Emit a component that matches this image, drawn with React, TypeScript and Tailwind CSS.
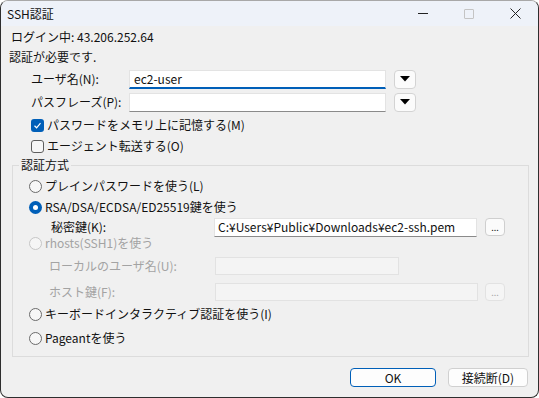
import React from 'react';

const font = { fontFamily: "'Noto Sans CJK JP', 'Noto Sans', sans-serif" };

function Radio({ checked, disabled }: { checked?: boolean; disabled?: boolean }) {
    if (checked) {
        return (
            <span className="w-[13px] h-[13px] rounded-full bg-[#005fb8] flex items-center justify-center shrink-0">
                <span className="w-[5px] h-[5px] rounded-full bg-white" />
            </span>
        );
    }
    return (
        <span
            className={`w-[13px] h-[13px] rounded-full border shrink-0 ${disabled ? 'border-[#c6c6c6] bg-[#f5f5f5]' : 'border-[#6b6b6b] bg-[#f7f7f7]'}`}
        />
    );
}

function Checkbox({ checked }: { checked?: boolean }) {
    if (checked) {
        return (
            <span className="w-[13px] h-[13px] rounded-[3px] bg-[#005fb8] flex items-center justify-center shrink-0">
                <svg width="9" height="9" viewBox="0 0 9 9">
                    <path d="M1.5 4.8 L3.6 6.8 L7.5 2.2" stroke="white" strokeWidth="1.2" fill="none" />
                </svg>
            </span>
        );
    }
    return <span className="w-[13px] h-[13px] rounded-[3px] border border-[#5f5f5f] bg-[#f7f7f7] shrink-0" />;
}

function DropButton() {
    return (
        <div className="w-[22px] h-[19px] rounded-[4px] border border-[#d3d3d3] bg-[#fbfbfb] flex items-center justify-center">
            <svg width="10" height="6" viewBox="0 0 10 6">
                <path d="M0 0 L10 0 L5 5.5 Z" fill="#000" />
            </svg>
        </div>
    );
}

function DotsButton({ disabled }: { disabled?: boolean }) {
    return (
        <div
            className={`w-[20px] h-[18px] rounded-[4px] border flex items-end justify-center pb-[3px] text-[9px] leading-none ${disabled ? 'border-[#e2e2e2] bg-[#f5f5f5] text-[#a8a8a8]' : 'border-[#cfcfcf] bg-[#fbfbfb] text-[#222]'}`}
        >
            ...
        </div>
    );
}

export default function App() {
    return (
        <div
            className="w-[539px] h-[398px] bg-[#f0f0f0] border border-[#2e2e2e] border-t-[#a8a8a8] rounded-t-lg rounded-b-lg overflow-hidden flex flex-col text-[12px] text-[#111]"
            style={font}
        >
            {/* Title bar */}
            <div className="h-[25px] bg-[#eef2f9] flex items-center shrink-0">
                <span className="pl-[6px] text-[12px] leading-none">SSH認証</span>
                <div className="ml-auto flex items-center h-full">
                    <div className="w-[46px] flex justify-center">
                        <span className="w-[10px] h-px bg-[#222]" />
                    </div>
                    <div className="w-[46px] flex justify-center">
                        <span className="w-[10px] h-[10px] border border-[#c4c4c4] rounded-[1px]" />
                    </div>
                    <div className="w-[46px] flex justify-center">
                        <svg width="11" height="11" viewBox="0 0 11 11">
                            <path d="M0.5 0.5 L10.5 10.5 M10.5 0.5 L0.5 10.5" stroke="#222" strokeWidth="1" />
                        </svg>
                    </div>
                </div>
            </div>

            <div className="flex flex-col">
                <div className="mt-[2px] h-[18px] pl-[10px] flex items-center">ログイン中: 43.206.252.64</div>
                <div className="mt-[2px] h-[18px] pl-[8px] flex items-center">認証が必要です.</div>

                <div className="mt-[4px] h-[18px] pl-[30px] flex items-center">
                    <span className="w-[98px]">ユーザ名(N):</span>
                    <div className="w-[257px] h-[19px] bg-white border border-[#e3e3e3] border-b-2 border-b-[#005fb8] flex items-center pl-[4px]">
                        ec2-user
                    </div>
                    <div className="ml-[8px]">
                        <DropButton />
                    </div>
                </div>

                <div className="mt-[5px] h-[18px] pl-[30px] flex items-center">
                    <span className="w-[98px]">パスフレーズ(P):</span>
                    <div className="w-[257px] h-[19px] bg-white border border-[#e3e3e3] border-b-[#8a8a8a]" />
                    <div className="ml-[8px]">
                        <DropButton />
                    </div>
                </div>

                <div className="mt-[7px] h-[14px] pl-[30px] flex items-center gap-[3px]">
                    <Checkbox checked />
                    <span>パスワードをメモリ上に記憶する(M)</span>
                </div>
                <div className="mt-[7px] h-[14px] pl-[30px] flex items-center gap-[3px]">
                    <Checkbox />
                    <span>エージェント転送する(O)</span>
                </div>

                {/* Group box */}
                <div className="relative mt-[12px] ml-[11px] w-[517px] h-[192px] border border-[#dcdcdc] flex flex-col">
                    <span className="absolute left-[6px] top-[-8px] px-[2px] bg-[#f0f0f0] leading-[14px]">認証方式</span>

                    <div className="mt-[13px] h-[14px] pl-[16px] flex items-center gap-[3px]">
                        <Radio />
                        <span>プレインパスワードを使う(L)</span>
                    </div>
                    <div className="mt-[7px] h-[14px] pl-[16px] flex items-center gap-[3px]">
                        <Radio checked />
                        <span>RSA/DSA/ECDSA/ED25519鍵を使う</span>
                    </div>
                    <div className="mt-[4px] h-[18px] pl-[38px] flex items-center">
                        <span className="w-[163px]">秘密鍵(K):</span>
                        <div className="w-[263px] h-[19px] bg-white border border-[#e3e3e3] border-b-[#8a8a8a] flex items-center pl-[3px]">
                            C:¥Users¥Public¥Downloads¥ec2-ssh.pem
                        </div>
                        <div className="ml-[8px]">
                            <DotsButton />
                        </div>
                    </div>
                    <div className="h-[14px] pl-[16px] flex items-center gap-[3px] text-[#a3a3a3]">
                        <Radio disabled />
                        <span>rhosts(SSH1)を使う</span>
                    </div>
                    <div className="mt-[7px] h-[18px] pl-[36px] flex items-center text-[#a3a3a3]">
                        <span className="w-[166px]">ローカルのユーザ名(U):</span>
                        <div className="w-[184px] h-[18px] bg-[#f4f4f4] border border-[#e2e2e2]" />
                    </div>
                    <div className="mt-[8px] h-[18px] pl-[36px] flex items-center text-[#a3a3a3]">
                        <span className="w-[166px]">ホスト鍵(F):</span>
                        <div className="w-[263px] h-[18px] bg-[#f4f4f4] border border-[#e2e2e2]" />
                        <div className="ml-[7px]">
                            <DotsButton disabled />
                        </div>
                    </div>
                    <div className="mt-[6px] h-[14px] pl-[16px] flex items-center gap-[3px]">
                        <Radio />
                        <span>キーボードインタラクティブ認証を使う(I)</span>
                    </div>
                    <div className="mt-[10px] h-[14px] pl-[16px] flex items-center gap-[3px]">
                        <Radio />
                        <span>Pageantを使う</span>
                    </div>
                </div>

                {/* Buttons */}
                <div className="mt-[11px] flex justify-end pr-[10px] gap-[12px]">
                    <div className="w-[86px] h-[19px] rounded-[4px] border border-[#005fb8] bg-[#fdfdfd] flex items-center justify-center">
                        OK
                    </div>
                    <div className="w-[80px] h-[19px] rounded-[4px] border border-[#d0d0d0] bg-[#fdfdfd] flex items-center justify-center">
                        接続断(D)
                    </div>
                </div>
            </div>
        </div>
    );
}
